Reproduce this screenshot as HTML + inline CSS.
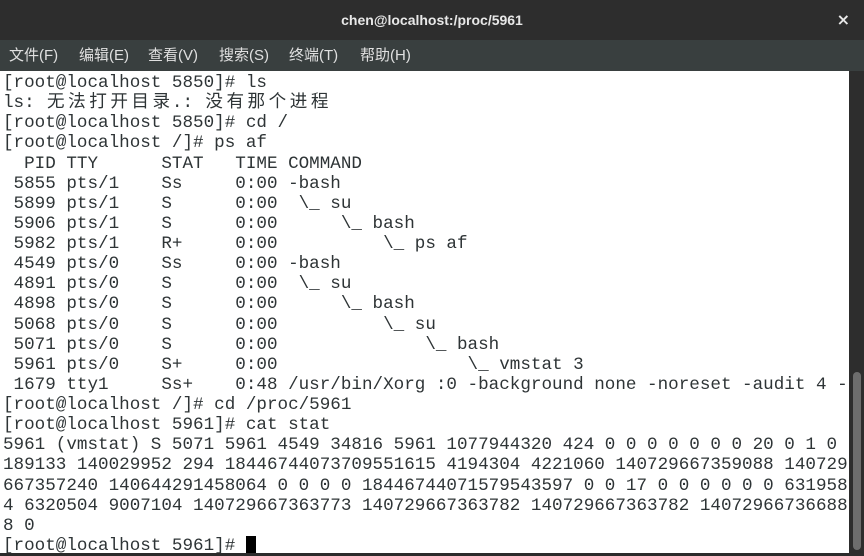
<!DOCTYPE html>
<html><head><meta charset="utf-8"><style>
html,body{margin:0;padding:0;width:864px;height:556px;overflow:hidden;background:#2b2b2b}
#title{position:absolute;left:0;top:0;width:864px;height:40px;background:#2d2d2d;color:#e8e8e8;font:bold 14px "Liberation Sans","DejaVu Sans",sans-serif;text-align:center;line-height:40px}
#close{position:absolute;right:14px;top:0;color:#e8e8e8;font:bold 16px "DejaVu Sans",sans-serif;line-height:40px}
#menu{position:absolute;left:0;top:40px;width:864px;height:31px;background:#393f3f;color:#e0e0e0;font:15px "Liberation Sans","Noto Sans CJK SC",sans-serif;line-height:31px}
#menu span{position:absolute;top:0}
#term{position:absolute;left:0;top:71px;width:849px;height:482px;background:#fff;overflow:hidden}
pre{margin:0;padding:2px 0 0 3px;font:17.6px/20.13px "Liberation Mono","Noto Sans CJK SC",monospace;color:#2e3436}
pre i{font-style:normal;display:inline-block;width:21.12px;text-align:center}
#sb{position:absolute;left:849px;top:71px;width:15px;height:485px;background:#2d2d2d}
#thumb{position:absolute;left:853px;top:372px;width:8px;height:178px;background:#6d6d6d;border-radius:4px}
.cur{background:#000;color:#fff}
</style></head><body>
<div id="title">chen@localhost:/proc/5961</div><div id="close">×</div>
<div id="menu"><span style="left:9px">文件(F)</span><span style="left:79px">编辑(E)</span><span style="left:148px">查看(V)</span><span style="left:219px">搜索(S)</span><span style="left:289px">终端(T)</span><span style="left:360px">帮助(H)</span></div>
<div id="term"><pre>[root@localhost 5850]# ls
ls: <i>无</i><i>法</i><i>打</i><i>开</i><i>目</i><i>录</i>.: <i>没</i><i>有</i><i>那</i><i>个</i><i>进</i><i>程</i>
[root@localhost 5850]# cd /
[root@localhost /]# ps af
  PID TTY      STAT   TIME COMMAND
 5855 pts/1    Ss     0:00 -bash
 5899 pts/1    S      0:00  \_ su
 5906 pts/1    S      0:00      \_ bash
 5982 pts/1    R+     0:00          \_ ps af
 4549 pts/0    Ss     0:00 -bash
 4891 pts/0    S      0:00  \_ su
 4898 pts/0    S      0:00      \_ bash
 5068 pts/0    S      0:00          \_ su
 5071 pts/0    S      0:00              \_ bash
 5961 pts/0    S+     0:00                  \_ vmstat 3
 1679 tty1     Ss+    0:48 /usr/bin/Xorg :0 -background none -noreset -audit 4 -
[root@localhost /]# cd /proc/5961
[root@localhost 5961]# cat stat
5961 (vmstat) S 5071 5961 4549 34816 5961 1077944320 424 0 0 0 0 0 0 0 20 0 1 0
189133 140029952 294 18446744073709551615 4194304 4221060 140729667359088 140729
667357240 140644291458064 0 0 0 0 18446744071579543597 0 0 17 0 0 0 0 0 0 631958
4 6320504 9007104 140729667363773 140729667363782 140729667363782 14072966736688
8 0
[root@localhost 5961]# <span class="cur"> </span></pre></div>
<div id="sb"></div><div id="thumb"></div>
</body></html>
